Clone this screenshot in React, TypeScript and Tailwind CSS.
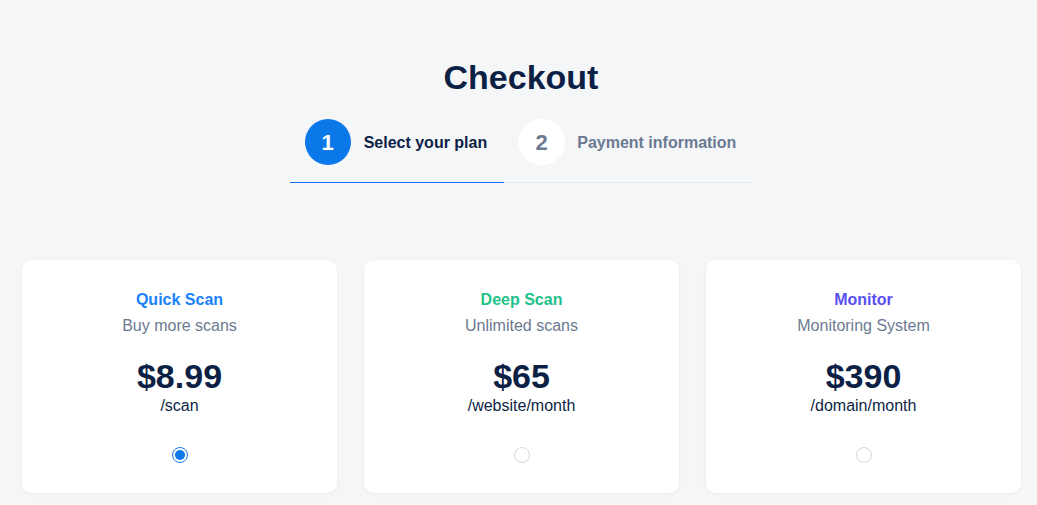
const plans = [
  { name: "Quick Scan", color: "text-[#1a82fb]", desc: "Buy more scans", price: "$8.99", unit: "/scan", selected: true },
  { name: "Deep Scan", color: "text-[#1fc28b]", desc: "Unlimited scans", price: "$65", unit: "/website/month", selected: false },
  { name: "Monitor", color: "text-[#5a4ff0]", desc: "Monitoring System", price: "$390", unit: "/domain/month", selected: false },
];

export default function App() {
  return (
    <div
      className="min-h-screen bg-[#f5f6f8] pt-[57px] pb-4 text-[#0c1f45]"
      style={{ fontFamily: '"Liberation Sans", Arial, sans-serif' }}
    >
      <h1 className="text-center pl-[5px] text-[34px] leading-[40px] font-bold">Checkout</h1>

      {/* Stepper */}
      <div className="flex justify-center mt-[22px] pl-[5px]">
        <div className="flex items-center gap-[13px] pl-[15px] pr-[17px] pb-[17px] border-b border-[#1a73e8]">
          <span className="w-[46px] h-[46px] rounded-full bg-[#0a78e8] text-white flex items-center justify-center text-[22px] font-bold">
            1
          </span>
          <span className="text-base font-bold pt-[2px]">Select your plan</span>
        </div>
        <div className="flex items-center gap-[12px] pl-[14px] pr-[16px] pb-[17px] border-b border-[#e3e6ea]">
          <span className="w-[47px] h-[46px] rounded-full bg-white text-[#6b7a90] flex items-center justify-center text-[22px] font-bold">
            2
          </span>
          <span className="text-base font-bold pt-[2px] text-[#6b7a90]">Payment information</span>
        </div>
      </div>

      {/* Plans */}
      <div className="mt-[77px] pl-[22px] pr-4 grid grid-cols-3 gap-[27px]">
        {plans.map((p) => (
          <div
            key={p.name}
            className="bg-white rounded-[10px] shadow-[0_1px_4px_rgba(16,24,40,0.04)] pt-[28px] pb-[30px] flex flex-col items-center text-center"
          >
            <div className={`text-base leading-6 font-bold ${p.color}`}>{p.name}</div>
            <div className="mt-[2px] text-base leading-6 text-[#6b7a90]">{p.desc}</div>
            <div className="mt-[20px] text-[34px] leading-[36px] font-bold">{p.price}</div>
            <div className="text-base leading-6">{p.unit}</div>
            <div className="mt-[29px]">
              {p.selected ? (
                <span className="w-4 h-4 rounded-full border border-[#1a7bea] flex items-center justify-center">
                  <span className="w-[10px] h-[10px] rounded-full bg-[#0a78e8]" />
                </span>
              ) : (
                <span className="block w-4 h-4 rounded-full border border-[#d4d8e0] bg-white" />
              )}
            </div>
          </div>
        ))}
      </div>
    </div>
  );
}
